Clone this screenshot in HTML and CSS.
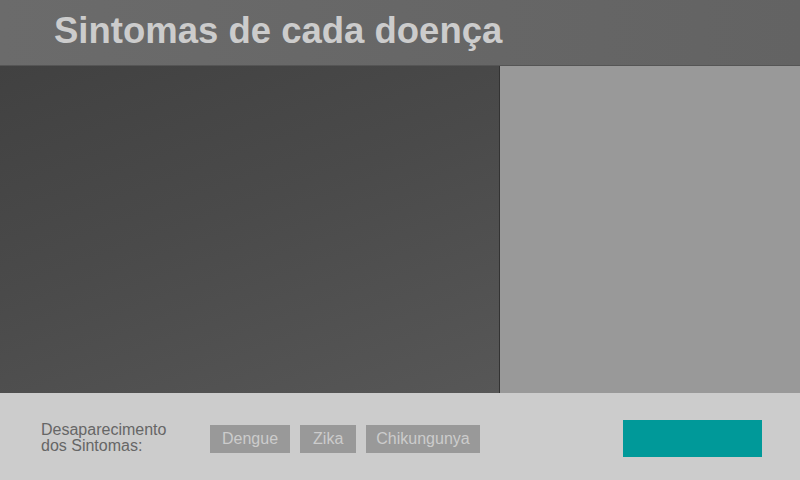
FILE: index.html
```html
<!DOCTYPE html>
<html lang="pt">
<head>
<meta charset="utf-8">
<title>Sintomas de cada doença</title>
<link rel="stylesheet" href="styles.css">
</head>
<body>
<div class="screen">
  <header class="header">
    <h1 class="title">Sintomas de cada doença</h1>
  </header>
  <main class="main">
    <section class="media"></section>
    <aside class="side"></aside>
  </main>
  <footer class="footer">
    <div class="label">Desaparecimento<br>dos Sintomas:</div>
    <div class="tabs">
      <button class="tab">Dengue</button>
      <button class="tab tab-short">Zika</button>
      <button class="tab tab-wide">Chikungunya</button>
    </div>
    <button class="action"></button>
  </footer>
</div>
</body>
</html>
```
FILE: styles.css
```css
* { box-sizing: border-box; }
html, body { margin: 0; padding: 0; }
body {
  width: 800px;
  height: 480px;
  overflow: hidden;
  font-family: "Liberation Sans", Arial, sans-serif;
  background: #cccccc;
}
.screen {
  display: flex;
  flex-direction: column;
  width: 800px;
  height: 480px;
}
.header {
  height: 66px;
  flex: none;
  display: flex;
  align-items: center;
  padding-left: 54px;
  background: linear-gradient(to right, #6b6b6b, #636363);
  border-bottom: 1px solid #555555;
}
.title {
  margin: 0;
  font-size: 36.5px;
  font-weight: bold;
  color: #cccccc;
  line-height: 1;
  padding-bottom: 2px;
}
.main {
  flex: none;
  height: 327px;
  display: flex;
}
.media {
  width: 500px;
  flex: none;
  background: linear-gradient(160deg, #414141 0%, #4a4a4a 45%, #575757 100%);
  border-right: 1px solid #333333;
}
.side {
  flex: 1;
  background: #999999;
}
.footer {
  flex: 1;
  display: flex;
  align-items: center;
  padding: 4px 38px 0 41px;
  background: #cccccc;
}
.label {
  font-size: 16px;
  line-height: 16px;
  color: #666666;
  width: 169px;
  padding-bottom: 1px;
}
.tabs {
  display: flex;
  gap: 10px;
}
.tab {
  height: 28px;
  padding: 0 12px;
  border: none;
  background: #999999;
  color: #cccccc;
  font-family: "Liberation Sans", Arial, sans-serif;
  font-size: 16px;
}
.tab-short {
  padding: 0 13px;
}
.tab-wide {
  padding: 0 10px;
}
.action {
  margin-left: auto;
  width: 139px;
  height: 37px;
  border: none;
  background: #009999;
}
```
